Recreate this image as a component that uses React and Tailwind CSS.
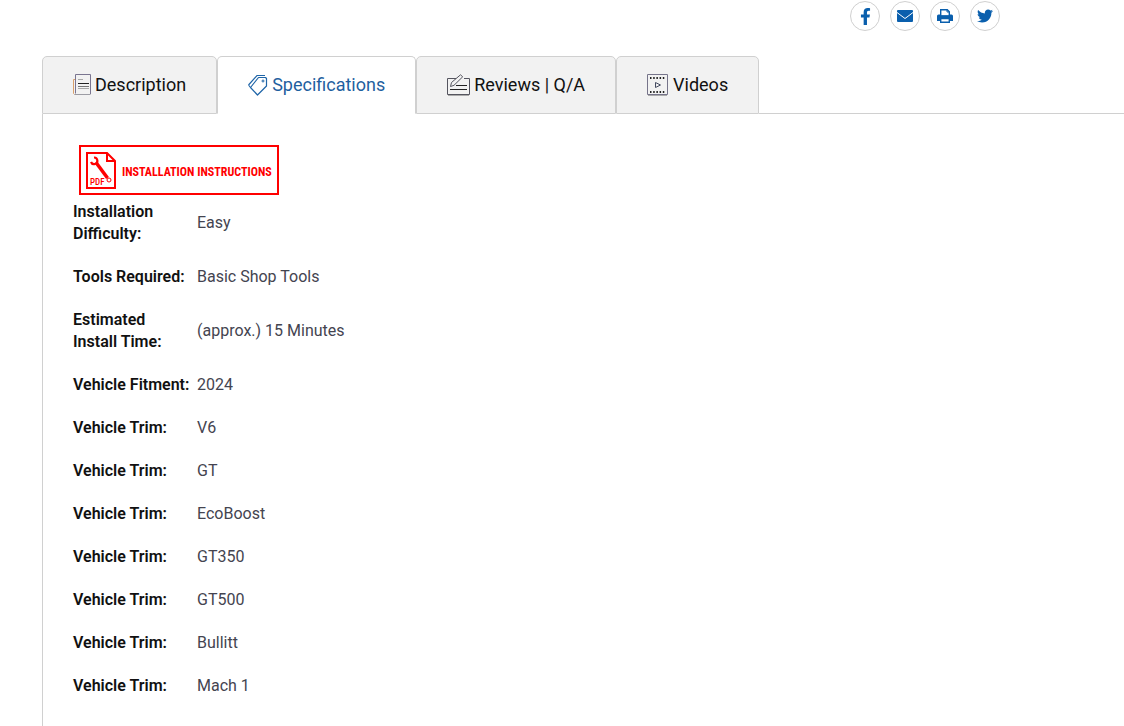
import React, { useState } from "react";
import { FaFacebookF, FaTwitter } from "react-icons/fa";

const DescriptionIcon = () => (
  <svg width="18" height="22" viewBox="1 0 18 22" className="shrink-0 overflow-visible" fill="none" aria-hidden="true">
    <path d="M3.5 5.5h-2v14l1 1" stroke="#d9a06c" />
    <path d="M3.5 19.5V.5h15v19.5" stroke="#7a7590" />
    <path d="M2.5 20.5h16" stroke="#9c9ca4" />
    <path d="M6 5.5h5M6 14.5h11" stroke="#a8a8a8" />
    <path d="M6 9.5h11" stroke="#222" />
    <path d="M6 12.5h11" stroke="#777" />
  </svg>
);

const TagIcon = () => (
  <svg width="20" height="22" viewBox="0 0 20 22" className="shrink-0" fill="none" stroke="#1f65a8" aria-hidden="true">
    <path d="M10.5 3.5h7l1 1v7.5l-9 9-7-7.5z" strokeWidth="1.2" strokeLinejoin="round" />
    <path d="M.5 11L9 1.5h8M.5 11l2 2.5" strokeWidth="1.2" />
    <circle cx="15" cy="7" r="1" />
  </svg>
);

const ReviewIcon = () => (
  <svg width="23" height="22" viewBox="0 0 23 22" className="shrink-0" fill="none" stroke="#55555f" aria-hidden="true">
    <path d="M9 4.5H.5v16h22v-16H17" />
    <path d="M1 21.5h21" stroke="#aaa" />
    <path d="M3.5 12.5l1-4L13.5.8l2.2 2L7 11.300z" strokeLinejoin="round" />
    <path d="M9 11.5h11M3 15.5h17" stroke="#222" />
  </svg>
);

const VideoIcon = () => (
  <svg width="22" height="22" viewBox="0 0 22 22" className="shrink-0" fill="none" aria-hidden="true">
    <path d="M.5.5h20v20H.5z" stroke="#76748a" />
    <path d="M1 21.5h19" stroke="#aaa" />
    <path d="M3 4h16M3 18h16" stroke="#222" strokeWidth="2" strokeDasharray="1.5 1.7" />
    <path d="M8.5 8.5v5l5-2.5z" stroke="#444a60" />
  </svg>
);

const MailIcon = () => (
  <svg width="16" height="12" viewBox="0 0 16 12" aria-hidden="true">
    <rect width="16" height="12" rx="1" fill="currentColor" />
    <path d="M0 2.5l8 6 8-6" fill="none" stroke="#fff" />
  </svg>
);

const PrintIcon = () => (
  <svg width="16" height="14" viewBox="0 0 16 14" aria-hidden="true">
    <path d="M1.5 5.5h13A1.5 1.5 0 0 1 16 7v5H0V7a1.5 1.5 0 0 1 1.5-1.5z" fill="currentColor" />
    <path d="M3.7 7V.7h6.6l2 2V7z" fill="#fff" stroke="currentColor" strokeWidth="1.4" />
    <path d="M10 .7v2.3h2.3" fill="none" stroke="currentColor" />
    <path d="M3.7 9.5h8.6v3.8H3.7z" fill="#fff" stroke="currentColor" strokeWidth="1.4" />
    <path d="M3 6.5h10v1.5H3z" fill="currentColor" />
  </svg>
);

const PdfIcon = () => (
  <svg width="30" height="37" viewBox="0 0 30 37" className="shrink-0" fill="none" stroke="#f00" aria-hidden="true">
    <path d="M1 1h20l8 8v27H1z" strokeWidth="2" />
    <path d="M21 1v8h8" strokeWidth="2" />
    <path d="M10 10.5L21.5 26" strokeWidth="3.5" />
    <path d="M8 5.5a3.300 3.300 0 1 1-3 4.500" strokeWidth="2.2" />
    <circle cx="23" cy="28" r="2" fill="#fff" />
    <text x="4" y="33" fill="#f00" stroke="none" fontSize="9" fontWeight="500" fontFamily="'Roboto Condensed', sans-serif">
      PDF
    </text>
  </svg>
);

const socials = [
  { label: "Facebook", icon: <FaFacebookF size={17} /> },
  { label: "Email", icon: <MailIcon /> },
  { label: "Print", icon: <PrintIcon /> },
  { label: "Twitter", icon: <FaTwitter size={16} /> },
];

const tabs = [
  { name: "Description", icon: <DescriptionIcon /> },
  { name: "Specifications", icon: <TagIcon /> },
  { name: "Reviews | Q/A", icon: <ReviewIcon /> },
  { name: "Videos", icon: <VideoIcon /> },
];

const specs = [
  ["Installation Difficulty:", "Easy"],
  ["Tools Required:", "Basic Shop Tools"],
  ["Estimated Install Time:", "(approx.) 15 Minutes"],
  ["Vehicle Fitment:", "2024"],
  ["Vehicle Trim:", "V6"],
  ["Vehicle Trim:", "GT"],
  ["Vehicle Trim:", "EcoBoost"],
  ["Vehicle Trim:", "GT350"],
  ["Vehicle Trim:", "GT500"],
  ["Vehicle Trim:", "Bullitt"],
  ["Vehicle Trim:", "Mach 1"],
];

const SpecTable = () => (
  <table className="text-base leading-[22px]">
    <tbody>
      {specs.map(([label, value], index) => (
        <tr key={index}>
          <th scope="row" className="w-[124px] pr-[5px] pb-[21px] text-left font-semibold text-[#111]">
            {label}
          </th>
          <td className="pb-[21px] text-[#444450]">{value}</td>
        </tr>
      ))}
    </tbody>
  </table>
);

export default function App() {
  const [active, setActive] = useState("Specifications");

  return (
    <div className="flex min-h-screen flex-col bg-white font-['Roboto',sans-serif]">
      <div className="flex justify-end gap-[10px] pt-px pr-[124px]">
        {socials.map((s) => (
          <a
            key={s.label}
            href="#"
            aria-label={s.label}
            className="flex size-[30px] items-center justify-center rounded-full border border-[#d0d0d0] text-[#0a5fad]"
          >
            {s.icon}
          </a>
        ))}
      </div>

      <div className="mt-[25px] ml-[42px] flex grow flex-col">
        <div role="tablist" className="flex">
          {tabs.map((tab) => (
            <button
              key={tab.name}
              role="tab"
              aria-selected={active === tab.name}
              onClick={() => setActive(tab.name)}
              className={`flex h-[58px] items-center gap-1 rounded-t-[5px] border border-[#d0d0d0] px-[30px] text-lg ${
                active === tab.name ? "border-b-white bg-white text-[#1f5f9f]" : "bg-[#f2f2f2] text-[#111]"
              }`}
            >
              {tab.icon}
              <span>{tab.name}</span>
            </button>
          ))}
          <div className="grow border-b border-[#d0d0d0]" />
        </div>

        <div role="tabpanel" className="grow border-l border-[#d0d0d0] pt-[31px] pl-[30px]">
          {active === "Specifications" && (
            <>
              <a
                href="#"
                className="mb-[6px] ml-[6px] flex h-[50px] w-[200px] items-center gap-[6px] border-2 border-[#f00] pl-[5px] font-['Roboto_Condensed',sans-serif] text-[12px] font-bold whitespace-nowrap text-[#f00]"
              >
                <PdfIcon />
                <span className="pt-1">INSTALLATION INSTRUCTIONS</span>
              </a>
              <SpecTable />
            </>
          )}
        </div>
      </div>
    </div>
  );
}
